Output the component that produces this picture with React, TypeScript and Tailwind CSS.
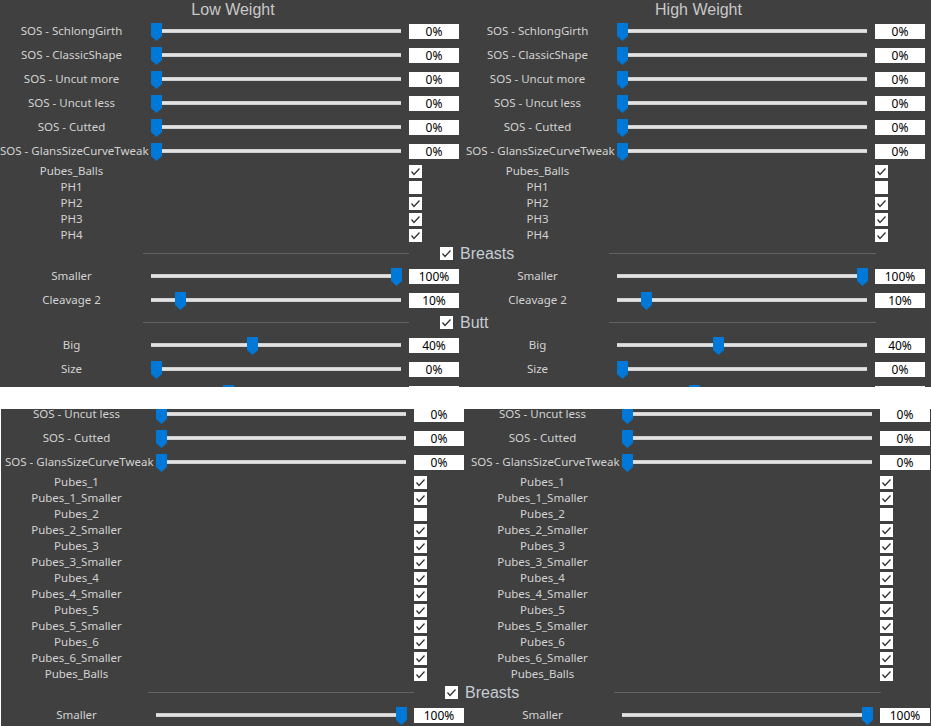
type Row =
  | { kind: "slider"; label: string; value: number; blank?: boolean }
  | { kind: "check"; label: string; checked: boolean }
  | { kind: "section"; title: string };

const topRows: Row[] = [
  { kind: "slider", label: "SOS - SchlongGirth", value: 0 },
  { kind: "slider", label: "SOS - ClassicShape", value: 0 },
  { kind: "slider", label: "SOS - Uncut more", value: 0 },
  { kind: "slider", label: "SOS - Uncut less", value: 0 },
  { kind: "slider", label: "SOS - Cutted", value: 0 },
  { kind: "slider", label: "SOS - GlansSizeCurveTweak", value: 0 },
  { kind: "check", label: "Pubes_Balls", checked: true },
  { kind: "check", label: "PH1", checked: false },
  { kind: "check", label: "PH2", checked: true },
  { kind: "check", label: "PH3", checked: true },
  { kind: "check", label: "PH4", checked: true },
  { kind: "section", title: "Breasts" },
  { kind: "slider", label: "Smaller", value: 100 },
  { kind: "slider", label: "Cleavage 2", value: 10 },
  { kind: "section", title: "Butt" },
  { kind: "slider", label: "Big", value: 40 },
  { kind: "slider", label: "Size", value: 0 },
  // only the top edge of this one shows in the capture
  { kind: "slider", label: "", value: 30, blank: true },
];

const pubes = ["1", "2", "3", "4", "5", "6"];

const bottomRows: Row[] = [
  { kind: "slider", label: "SOS - Uncut less", value: 0 },
  { kind: "slider", label: "SOS - Cutted", value: 0 },
  { kind: "slider", label: "SOS - GlansSizeCurveTweak", value: 0 },
  ...pubes.flatMap((n): Row[] => [
    { kind: "check", label: `Pubes_${n}`, checked: n !== "2" },
    { kind: "check", label: `Pubes_${n}_Smaller`, checked: true },
  ]),
  { kind: "check", label: "Pubes_Balls", checked: true },
  { kind: "section", title: "Breasts" },
  { kind: "slider", label: "Smaller", value: 100 },
];

function CheckBox({ checked }: { checked: boolean }) {
  return (
    <div className="w-[13px] h-[13px] bg-white flex items-center justify-center shrink-0">
      {checked && (
        <svg width="11" height="11" viewBox="0 0 11 11">
          <polyline points="1.5,5.5 4,8.5 9.5,2.5" fill="none" stroke="#333" strokeWidth="1.3" />
        </svg>
      )}
    </div>
  );
}

function Slider({ value }: { value: number }) {
  return (
    <div className="relative w-[266px] h-full flex items-center px-2">
      <div className="w-full h-[4px] bg-[#e2e2e2] border-y border-[#d0d0d0]" />
      {/* thumb */}
      <svg
        className="absolute top-[4px]"
        style={{ left: 8 + (value / 100) * 240 }}
        width="11"
        height="18"
        viewBox="0 0 11 18"
      >
        <polygon points="0,0 11,0 11,13 5.5,18 0,13" fill="#0078d7" />
      </svg>
    </div>
  );
}

function Half({ row }: { row: Row }) {
  if (row.kind === "slider") {
    return (
      <div className="flex items-center h-6 w-[466px] shrink-0">
        <div className="w-[143px] text-center whitespace-nowrap text-[11.5px] text-[#d2d2d2]">{row.label}</div>
        <Slider value={row.value} />
        <div className="w-[50px] h-[15px] bg-white text-black text-[12px] leading-[15px] text-center">
          {row.blank ? "" : `${row.value}%`}
        </div>
      </div>
    );
  }
  if (row.kind === "check") {
    return (
      <div className="flex items-center h-4 w-[466px] shrink-0">
        <div className="w-[143px] text-center whitespace-nowrap text-[11.5px] text-[#d2d2d2]">{row.label}</div>
        <div className="w-[266px]" />
        <CheckBox checked={row.checked} />
      </div>
    );
  }
  return null;
}

function SectionRow({ title }: { title: string }) {
  return (
    <div className="flex items-center h-[21px]">
      <div className="w-[143px] shrink-0" />
      <div className="w-[266px] h-px bg-[#636363] shrink-0" />
      <div className="w-[200px] shrink-0 flex items-center gap-[7px] pl-[31px]">
        <CheckBox checked />
        <span className="text-[16px] text-[#c6ccd3] font-['Liberation_Sans',sans-serif]">{title}</span>
      </div>
      <div className="w-[267px] h-px bg-[#636363] shrink-0" />
    </div>
  );
}

function Rows({ rows }: { rows: Row[] }) {
  return (
    <>
      {rows.map((row, i) =>
        row.kind === "section" ? (
          <SectionRow key={i} title={row.title} />
        ) : (
          <div key={i} className="flex">
            <Half row={row} />
            <Half row={row} />
          </div>
        )
      )}
    </>
  );
}

export default function App() {
  return (
    <div className="w-[931px] h-[726px] bg-white overflow-hidden font-['Noto_Sans',sans-serif]">
      {/* top capture */}
      <div className="h-[387px] bg-[#404040] overflow-hidden">
        <div className="flex h-[19px] items-center text-[16px] text-[#c8c8c8] font-['Liberation_Sans',sans-serif]">
          <div className="w-[466px] text-center">Low Weight</div>
          <div className="w-[465px] text-center">High Weight</div>
        </div>
        <Rows rows={topRows} />
      </div>

      {/* bottom capture, scrolled further down */}
      <div className="mt-[22px] ml-px h-[317px] bg-[#404040] overflow-hidden pl-1">
        <div className="-mt-[7px]">
          <Rows rows={bottomRows} />
        </div>
      </div>
    </div>
  );
}
